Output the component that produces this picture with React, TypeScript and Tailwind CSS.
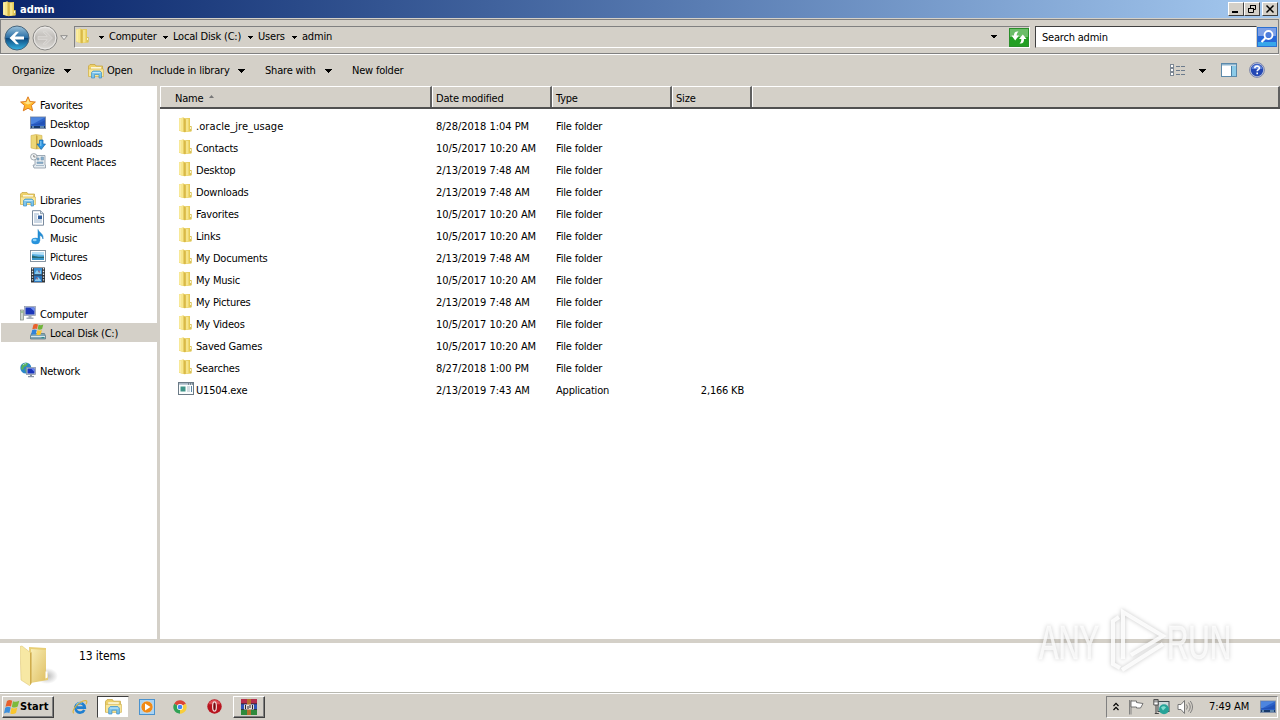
import React from 'react';

interface IconProps {
  className?: string;
}

const FolderIcon: React.FC<IconProps> = ({ className = 'w-4 h-4' }) => (
  <svg viewBox="0 0 16 16" className={className}>
    <path d="M1 1.500 5.500.5 6.500 1.200 12 1v8l1.500.5v5L8 15l-1.500.3-5.500-1.500z" fill="#e6cb55" />
    <path d="M1 1.500 5.500.5v14.500L1 13.500z" fill="#f7e68d" />
    <path d="M5.700 1 7.500 2.500V15l-1.800-.3z" fill="#d8b84a" />
    <path d="M8 2h2.500v12.300L8 14.700z" fill="#f5e48c" />
    <path d="M12 9h1.500v5l-1.500.3z" fill="#d9c25a" />
    <path d="M12 10h1v2h-1z" fill="#fbf5d2" />
    <path d="M2.200 13.500v-12" stroke="#fff6c2" strokeWidth=".7" />
  </svg>
);

const StarIcon = () => (
  <svg viewBox="0 0 16 16" className="w-4 h-4">
    <path d="M8 .8l2.100 4.700 5.300.5-4 3.500 1.300 5.300L8 12.200l-4.700 2.600 1.300-5.300-4-3.500 5.300-.5z" fill="#ffb72b" stroke="#d9731a" strokeWidth=".9" />
    <path d="M8 2.500 9.500 6.300l3.500.3-5 2-4.800-2 3.300-.3z" fill="#ffe48a" />
  </svg>
);

const DesktopIcon = () => (
  <svg viewBox="0 0 16 16" className="w-4 h-4">
    <rect x=".5" y="2" width="15" height="11.500" fill="#2c62c9" stroke="#8290a8" />
    <path d="M1 2.500h14L1 10z" fill="#4d85df" />
    <path d="M1 9c5 1 9-1 14-4v5H1z" fill="#1c48ab" opacity=".6" />
    <path d="M1 11h14v2H1z" fill="#173a6b" />
    <path d="M2 11.500h2v1H2zM10 11.500h4v1h-4z" fill="#a8d2ef" />
  </svg>
);

const DownloadsIcon = () => (
  <svg viewBox="0 0 16 16" className="w-4 h-4">
    <path d="M1 1.500 6 .5l6 1v13l-6 .5-5-1z" fill="#edd777" stroke="#d2b04e" strokeWidth=".6" />
    <path d="M6 1v14l1.500-.2V2z" fill="#c8a540" />
    <path d="M9.500 6h3.500v4h2.500L11.200 15.500 7 10h2.500z" fill="#2e95e0" stroke="#1665ad" strokeWidth=".7" />
    <path d="M10.300 7h1v5h-1z" fill="#8ccdf7" />
  </svg>
);

const RecentIcon = () => (
  <svg viewBox="0 0 16 16" className="w-4 h-4">
    <path d="M5 2.500h10v9.500h.5v3H4l-1-3h2z" fill="#e4ebf0" stroke="#8a98a5" strokeWidth=".8" />
    <path d="M7 5h2v2H7zM11 4h2.500v3H11zM7 9h6v1.500H7zM6 12.500h8" fill="#84b0d0" stroke="#7d99b0" strokeWidth=".6" />
    <circle cx="3.800" cy="3.800" r="3.200" fill="#f5f7f8" stroke="#8a949c" strokeWidth=".8" />
    <path d="M3.800 2v2h1.700" fill="none" stroke="#555" strokeWidth=".7" />
  </svg>
);

const LibraryIcon: React.FC<IconProps> = ({ className = 'w-4 h-4' }) => (
  <svg viewBox="0 0 16 16" className={className}>
    <path d="M.5 3 2 1.500h5l1 1.500h6.500v10H.5z" fill="#eed16a" stroke="#c4a23c" strokeWidth=".7" />
    <path d="M3 4h10v3H3z" fill="#fdf7d9" />
    <path d="M.5 6h15v7.500H.5z" fill="#f8e69a" stroke="#d0b14c" strokeWidth=".6" />
    <path d="M3.500 15V9.500L5 8h7l1.500 1.500V15H11v-3.500H6.500V15z" fill="#7cc4ec" stroke="#3d8fc6" strokeWidth=".7" />
    <path d="M4.500 9.500h8" stroke="#c4e7fa" />
  </svg>
);

const DocumentIcon = () => (
  <svg viewBox="0 0 16 16" className="w-4 h-4">
    <path d="M2.500.7h8l3 3v11.500h-11z" fill="#fff" stroke="#6c7f94" strokeWidth=".9" />
    <path d="M10.500.7v3h3" fill="#d5dfe8" stroke="#6c7f94" strokeWidth=".7" />
    <path d="M4 4h5M4 6h3M4 8h3M4 10h8M4 12h8" stroke="#7d9cbd" strokeWidth=".8" />
    <path d="M8 5.500h4V9H8z" fill="#2f5f9f" />
  </svg>
);

const MusicIcon = () => (
  <svg viewBox="0 0 16 16" className="w-4 h-4">
    <path d="M8 .5c.5 3 6 4 5 9.500-.6-2.500-2-3.400-3.200-3.500V12H8z" fill="#2390d8" stroke="#1879bc" strokeWidth=".5" />
    <ellipse cx="5.600" cy="12" rx="4.200" ry="3.300" fill="#2793dc" />
    <ellipse cx="4.700" cy="11" rx="2" ry="1.200" fill="#8fd2f7" />
  </svg>
);

const PictureIcon = () => (
  <svg viewBox="0 0 16 16" className="w-4 h-4">
    <rect x=".5" y="2.500" width="15" height="11" fill="#fff" stroke="#7b8a99" strokeWidth=".9" />
    <path d="M2 4h12v8H2z" fill="#5cb3e6" />
    <path d="M2 4h12v3L2 6z" fill="#b9e1f7" />
    <path d="M2 7.500c3 0 4 2 12 1V12H2z" fill="#276a76" />
    <path d="M2 10h12v2H2z" fill="#3995c8" />
  </svg>
);

const VideoIcon = () => (
  <svg viewBox="0 0 16 16" className="w-4 h-4">
    <path d="M1 .5h14v15H1z" fill="#2e3338" />
    <path d="M4 1h8v6.500H4z" fill="#3c8fd2" />
    <path d="M4 8.500h8V15H4z" fill="#2a75bd" />
    <path d="M5 6l2-3 2 2 2-2v4H5zM5 13l3-3 3 3v1H5z" fill="#8ccbec" />
    <path d="M8 3l2 2-1 1zM6 10l2 1-1 2z" fill="#a05064" />
    <path d="M2.500 1v14M13.500 1v14" stroke="#e6eaee" strokeWidth="1.300" strokeDasharray="1.400 1.400" />
  </svg>
);

const ComputerIcon = () => (
  <svg viewBox="0 0 16 16" className="w-4 h-4">
    <rect x=".5" y="5" width="3" height="10" fill="#cfd6cf" stroke="#7f8b82" strokeWidth=".7" />
    <path d="M1.200 7h1.600" stroke="#51a24a" />
    <rect x="4.500" y="1.500" width="11" height="9" fill="#c9d0dc" stroke="#8b95a8" strokeWidth=".7" />
    <path d="M5.500 2.500h9v7h-9z" fill="#1b36ba" />
    <path d="M10 2.500h4.500v4z" fill="#6d8df0" />
    <path d="M8.500 10.500h3v2h2v1.500h-7v-1.500h2z" fill="#a4adba" />
  </svg>
);

const WindowsFlag: React.FC<IconProps> = ({ className = 'w-4 h-4' }) => (
  <svg viewBox="0 0 16 16" className={className}>
    <path d="M3 2c2-1.300 3.500-1 5.200-.2L7 7.500C5.300 6.700 3.700 6.600 1.500 7.800z" fill="#e8602c" />
    <path d="M9 2.200c2 .9 3.700.8 6.300-.4L13.700 7.600c-2 1.200-4 1.200-5.900.3z" fill="#7dba3c" />
    <path d="M1.200 8.700c2-1.200 3.700-1 5.500-.3l-1.300 5.700c-1.700-.8-3.200-.8-5.400.4z" fill="#3d8fdc" />
    <path d="M7.500 8.800c2 .9 3.700.8 5.800-.4L12 14.100c-2.100 1.200-3.800 1.300-5.700.4z" fill="#f9c62e" />
  </svg>
);

const DiskIcon = () => (
  <svg viewBox="0 0 16 16" className="w-4 h-4">
    <path d="M1.500 9.500h13l1 2.500v3H.5v-3z" fill="#7fa5b4" stroke="#56727e" strokeWidth=".7" />
    <path d="M1 12.500h14" stroke="#d5e6ed" />
    <path d="M11.500 13h2.500v1.200h-2.500z" fill="#2b8f8b" />
    <path d="M3.500.5c1.800-.8 3-.6 4.500 0l-1 4.500C5.500 4.500 4 4.500 2.300 5.300z" fill="#e8602c" />
    <path d="M8.600.7c1.600.6 3 .6 4.700-.2l-1.200 4.500c-1.700.8-3 .8-4.500.2z" fill="#6fb43a" />
    <path d="M2.200 6c1.700-.8 3-.6 4.500 0l-1.100 4.500c-1.500-.5-2.700-.5-4.500.3z" fill="#2f83da" />
    <path d="M7.400 6.200c1.500.6 2.900.6 4.500-.2l-1.200 4.500c-1.600.8-3 .8-4.400.2z" fill="#f9c62e" />
  </svg>
);

const NetworkIcon = () => (
  <svg viewBox="0 0 16 16" className="w-4 h-4">
    <circle cx="5.800" cy="6" r="5.500" fill="#2b86c9" />
    <path d="M2 3c2-2 4-2.500 6-1.500L6.500 4 4 5 3 8 1 7zM5 7l3 0 0 3-2 1z" fill="#58b35a" />
    <path d="M3 3c1-1 2-1.300 3-1.300" stroke="#b9e7f5" />
    <rect x="6.500" y="5.500" width="9" height="7" fill="#c9d0dc" stroke="#7f8ba0" strokeWidth=".7" />
    <path d="M7.500 6.500h7v5h-7z" fill="#1a35bd" />
    <path d="M11 6.500h3.500V10z" fill="#6786ee" />
    <path d="M10 12.500h2v1.500h2v1.300H8V14h2z" fill="#8793a4" />
  </svg>
);

const AppIcon = () => (
  <svg viewBox="0 0 16 16" className="w-4 h-4">
    <rect x=".5" y="1.500" width="15" height="12" fill="#fbfdfd" stroke="#6b7a86" />
    <path d="M1 2h14v1.700H1z" fill="#a7b6c4" />
    <path d="M10 3h1M12 3h1M14 3h.8" stroke="#37474f" />
    <path d="M2.500 5.500h5v5h-5z" fill="#3f9488" />
    <path d="M9 6h3M9 8h3M9 10h3" stroke="#9fb3c0" strokeWidth=".9" />
    <path d="M13.500 5v6" stroke="#5b86a5" />
  </svg>
);

const BackButton = () => (
  <svg viewBox="0 0 26 26" className="w-[26px] h-[26px]">
    <defs>
      <linearGradient id="back" x1="0" y1="0" x2="0" y2="1">
        <stop offset="0" stopColor="#9cc3dc" />
        <stop offset=".48" stopColor="#2a6fa6" />
        <stop offset=".52" stopColor="#0c4a80" />
        <stop offset="1" stopColor="#38b4e4" />
      </linearGradient>
    </defs>
    <circle cx="13" cy="13" r="12" fill="url(#back)" stroke="#47657c" />
    <path d="M5.500 13 12 6.800h3L10.800 11.400H20v3.200h-9.200l4.200 4.600h-3z" fill="#fff" />
  </svg>
);

const ForwardButton = () => (
  <svg viewBox="0 0 26 26" className="w-[26px] h-[26px]">
    <defs>
      <linearGradient id="fwd" x1="0" y1="0" x2="0" y2="1">
        <stop offset="0" stopColor="#e4e2df" />
        <stop offset=".5" stopColor="#bdbab6" />
        <stop offset="1" stopColor="#dedcd8" />
      </linearGradient>
    </defs>
    <circle cx="13" cy="13" r="12" fill="url(#fwd)" stroke="#8b8a88" />
    <circle cx="13" cy="13" r="10.800" fill="none" stroke="#eceae8" />
    <path d="M20.500 13 14 6.800h-3l4.200 4.600H6v3.200h9.200L11 19.200h3z" fill="#cfccc8" stroke="#dddbd8" strokeWidth=".8" />
  </svg>
);

const Arrow: React.FC<IconProps> = ({ className = 'w-[7px] h-1' }) => (
  <svg viewBox="0 0 7 4" className={className} shapeRendering="crispEdges">
    <path d="M0 0h7L3.500 4z" fill="#000" />
  </svg>
);

const RefreshIcon = () => (
  <svg viewBox="0 0 20 19" className="w-5 h-[19px]">
    <rect width="20" height="19" fill="#2b8f2b" />
    <path d="M1 1h18v8H1z" fill="#6bbd68" />
    <path d="M1 9h18v9H1z" fill="#23a023" />
    <path d="M9.500 3.500C6 3 4.800 5 5 7.500H2.500l3.700 5 3.800-5H7.700c0-1.500.3-2.800 1.800-4z" fill="#fff" />
    <path d="M10.500 15.500c3.500.5 4.700-1.500 4.500-4.500h2.500l-3.700-4.500L10 11h2.300c0 1.700-.3 3.300-1.800 4.500z" fill="#fff" />
  </svg>
);

const SearchIcon = () => (
  <svg viewBox="0 0 20 20" className="w-5 h-5">
    <rect width="20" height="20" fill="#2c6fd0" />
    <path d="M1 1h18v8H1z" fill="#7c9fe6" />
    <path d="M1 9h18v10H1z" fill="#2767d8" />
    <path d="M1 15h18v4H1z" fill="#36a6ea" />
    <circle cx="11.500" cy="8" r="4" fill="#4c7cdc" stroke="#fff" strokeWidth="1.800" />
    <path d="M8.500 11 4.500 15" stroke="#fff" strokeWidth="2.200" />
  </svg>
);

const ViewIcon = () => (
  <svg viewBox="0 0 16 13" className="w-4 h-[13px]" shapeRendering="crispEdges">
    {[0, 4, 8].map((y) => (
      <g key={y}>
        <rect x=".5" y={y + 0.5} width="3" height="3" fill="#fff" stroke="#7d8894" />
        <path d={`M6 ${y + 2.500}h4M11 ${y + 2.500}h4`} stroke="#6c7b8c" />
      </g>
    ))}
  </svg>
);

const PaneIcon = () => (
  <svg viewBox="0 0 16 14" className="w-4 h-3.5">
    <rect x=".5" y=".5" width="15" height="13" fill="#fff" stroke="#5b89aa" />
    <path d="M1 1h14v1.500H1z" fill="#8db4ce" />
    <path d="M10.500 3h4.500v10h-4.500z" fill="#8ccbe8" />
    <path d="M10.500 3v10" stroke="#4b80a6" />
  </svg>
);

const HelpIcon = () => (
  <svg viewBox="0 0 16 16" className="w-4 h-4">
    <circle cx="8" cy="8" r="7.400" fill="#c4cbe0" stroke="#6672a0" strokeWidth=".8" />
    <circle cx="8" cy="8" r="6.200" fill="#2347b4" />
    <path d="M2.500 7a5.600 5.600 0 0 1 11 0z" fill="#5f82d8" />
    <path d="M5.800 6.300c0-3 4.600-2.800 4.600-.3 0 1.700-2.200 1.700-2.200 3.300M8.200 10.500v1.700" fill="none" stroke="#fff" strokeWidth="1.600" />
  </svg>
);

const IeIcon = () => (
  <svg viewBox="0 0 16 16" className="w-4 h-4">
    <path d="M12.300 11A4.700 4.700 0 1 1 12.800 8.700H5" fill="none" stroke="#1f7fd0" strokeWidth="2.700" />
    <path d="M4 5.500A5 5 0 0 1 10 4" fill="none" stroke="#85cdf6" />
    <path d="M1.800 14.300C-1.500 12 7 2 13.500 1.500c2 0 1.500 2.300.5 3.700" fill="none" stroke="#dfb436" strokeWidth="1.100" />
  </svg>
);

const MediaIcon = () => (
  <svg viewBox="0 0 16 16" className="w-4 h-4">
    <rect x=".5" y=".5" width="15" height="15" fill="#a9d3f3" stroke="#4a92ce" />
    <circle cx="8" cy="8" r="6" fill="#f18a16" stroke="#d4e6f5" strokeWidth=".6" />
    <path d="M6 4.500v7L11.500 8z" fill="#fff" />
  </svg>
);

const ChromeIcon = () => (
  <svg viewBox="0 0 16 16" className="w-3.5 h-3.5">
    <path d="M8 8 1.400 4.200A7.600 7.600 0 0 1 14.700 4.400z" fill="#dc4437" />
    <path d="M8 8 14.700 4.400A7.600 7.600 0 0 1 8 15.600z" fill="#f8ce3b" />
    <path d="M8 8v7.600A7.600 7.600 0 0 1 1.400 4.200z" fill="#2fa255" />
    <circle cx="8" cy="8" r="3.500" fill="#fff" />
    <circle cx="8" cy="8" r="2.700" fill="#4285f4" />
  </svg>
);

const OperaIcon = () => (
  <svg viewBox="0 0 16 16" className="w-[15px] h-[15px]">
    <circle cx="8" cy="8" r="7.700" fill="#b8141f" />
    <path d="M1.500 5.500a7 7 0 0 1 13 0z" fill="#dc4b53" />
    <ellipse cx="8" cy="8" rx="2" ry="5" fill="#7c0a12" stroke="#f4dcdc" strokeWidth="1.300" />
  </svg>
);

const WinrarIcon = () => (
  <svg viewBox="0 0 16 16" className="w-4 h-4">
    <path d="M0 0h16v5H0z" fill="#b52d4c" />
    <path d="M0 5h16v5.500H0z" fill="#2f55b8" />
    <path d="M0 10.500h16V16H0z" fill="#2f8a3c" />
    <path d="M0 4.800h16M0 10.500h16" stroke="#1f2433" strokeWidth=".8" />
    <path d="M6 0h4v16H6z" fill="#b5702c" />
    <path d="M3 5.500h10v5H3z" fill="#e4dfd6" />
    <path d="M4.500 6v4M7 7v3M9 6v3M11.500 6v4" stroke="#2b2434" strokeWidth="1" />
  </svg>
);

const TrayFlag = () => (
  <svg viewBox="0 0 16 16" className="w-4 h-4">
    <path d="M1.500 1v14.500M3 1v14.500" stroke="#6e6e6e" strokeWidth=".8" />
    <path d="M3 2h5.500v1.500L15 4.500 12.500 9H8.500V8H3z" fill="#fff" stroke="#666" strokeWidth=".9" />
  </svg>
);

const TrayNetwork = () => (
  <svg viewBox="0 0 17 16" className="w-[17px] h-4">
    <rect x="5" y="2.500" width="11" height="10" fill="#cfdadb" stroke="#3f4b4f" />
    <path d="M.8.500h4.400v5.500H.8z" fill="#fff" stroke="#444" strokeWidth=".9" />
    <path d="M2 .5v3M4 .5v3M3 6v8.500M1.800 14.500h4" fill="none" stroke="#444" />
    <circle cx="11" cy="10.300" r="5" fill="#26a398" />
    <path d="M8 8.500c2-2 4-1 5 0l-3 3z" fill="#7fdccd" />
  </svg>
);

const TraySpeaker = () => (
  <svg viewBox="0 0 17 16" className="w-[17px] h-4">
    <path d="M1 5.500h3L7.500 1.500v13L4 10.500H1z" fill="#fff" stroke="#777" />
    <path d="M9.500 5.500q1.800 2.500 0 5M11.500 3.500q3.500 4.500 0 9M13.300 2q4.500 6 0 12" fill="none" stroke="#777" strokeWidth=".9" />
  </svg>
);

const LargeFolder = () => (
  <svg viewBox="0 0 38 42" className="w-[38px] h-[42px]">
    <defs>
      <linearGradient id="lf" x1="0" y1="0" x2="1" y2="1">
        <stop offset="0" stopColor="#f9eeb5" />
        <stop offset="1" stopColor="#dfc065" />
      </linearGradient>
      <radialGradient id="sh">
        <stop offset="0" stopColor="#999" stopOpacity=".7" />
        <stop offset="1" stopColor="#999" stopOpacity="0" />
      </radialGradient>
    </defs>
    <ellipse cx="27" cy="31" rx="11" ry="8" fill="url(#sh)" />
    <path d="M9 2 26 3v24l2 2v6L10 38z" fill="#e8ce75" />
    <path d="M11 4l15 1v22l-1 8-14 2z" fill="url(#lf)" />
    <path d="M0 1.500 2 1l9 7v31l-1.500 1.500L1 35z" fill="#f7e8a4" stroke="#dfc878" strokeWidth=".6" />
    <path d="M10 8l1.500-1v31L10 40z" fill="#cfac4c" />
    <path d="M25.500 26.500h2v6l-2 1z" fill="#fff" />
  </svg>
);

const Watermark = () => (
  <svg
    viewBox="0 0 200 70"
    className="absolute left-[1035px] top-[605px] w-[200px] h-[70px] overflow-visible drop-shadow-[0_0_2px_rgba(0,0,0,0.26)]"
  >
    <g fill="#fff" fillOpacity=".75" stroke="#fff" strokeOpacity=".5" strokeWidth=".8" fontFamily="Liberation Sans, sans-serif" fontSize="48">
      <text x="4" y="54" textLength="60" lengthAdjust="spacingAndGlyphs">ANY</text>
      <text x="132" y="54" textLength="64" lengthAdjust="spacingAndGlyphs">RUN</text>
    </g>
    <path
      d="M84 12 78 16v43l7 4M88 54V7L128 31 96 50M87 65 128 39"
      fill="none"
      stroke="#fff"
      strokeOpacity=".85"
      strokeWidth="4"
    />
  </svg>
);

const navGroups = [
  {
    title: 'Favorites',
    icon: <StarIcon />,
    items: [
      { name: 'Desktop', icon: <DesktopIcon /> },
      { name: 'Downloads', icon: <DownloadsIcon /> },
      { name: 'Recent Places', icon: <RecentIcon /> },
    ],
  },
  {
    title: 'Libraries',
    icon: <LibraryIcon />,
    items: [
      { name: 'Documents', icon: <DocumentIcon /> },
      { name: 'Music', icon: <MusicIcon /> },
      { name: 'Pictures', icon: <PictureIcon /> },
      { name: 'Videos', icon: <VideoIcon /> },
    ],
  },
  {
    title: 'Computer',
    icon: <ComputerIcon />,
    items: [{ name: 'Local Disk (C:)', icon: <DiskIcon />, selected: true }],
  },
  { title: 'Network', icon: <NetworkIcon />, items: [] },
];

const files = [
  { name: '.oracle_jre_usage', date: '8/28/2018 1:04 PM' },
  { name: 'Contacts', date: '10/5/2017 10:20 AM' },
  { name: 'Desktop', date: '2/13/2019 7:48 AM' },
  { name: 'Downloads', date: '2/13/2019 7:48 AM' },
  { name: 'Favorites', date: '10/5/2017 10:20 AM' },
  { name: 'Links', date: '10/5/2017 10:20 AM' },
  { name: 'My Documents', date: '2/13/2019 7:48 AM' },
  { name: 'My Music', date: '10/5/2017 10:20 AM' },
  { name: 'My Pictures', date: '2/13/2019 7:48 AM' },
  { name: 'My Videos', date: '10/5/2017 10:20 AM' },
  { name: 'Saved Games', date: '10/5/2017 10:20 AM' },
  { name: 'Searches', date: '8/27/2018 1:00 PM' },
  { name: 'U1504.exe', date: '2/13/2019 7:43 AM', type: 'Application', size: '2,166 KB' },
];

const crumbs = [
  { name: 'Computer', width: 'w-[64px]' },
  { name: 'Local Disk (C:)', width: 'w-[85px]' },
  { name: 'Users', width: 'w-[44px]' },
  { name: 'admin', width: 'w-[44px]' },
];

const TitleBar = () => (
  <div className="h-[18px] shrink-0 flex items-center bg-linear-to-r from-[#0a246a] to-[#a6caf0] pl-0.5 pr-0.5">
    <FolderIcon />
    <span className="ml-0.5 flex-1 pt-px text-white font-bold tracking-normal">admin</span>
    <div className="flex h-3.5">
      {['min', 'max', 'close'].map((b) => (
        <div
          key={b}
          className={`w-4 h-3.5 bg-[#d4d0c8] border border-t-white border-l-white border-r-[#404040] border-b-[#404040] flex items-center justify-center ${b === 'close' ? 'ml-0.5' : ''}`}
        >
          <svg viewBox="0 0 10 10" className="w-2.5 h-2.5" fill="none" stroke="#000">
            {b === 'min' && <path d="M1 8h6" strokeWidth="2" />}
            {b === 'max' && <path d="M3.500 4V1.500h5v4H7M3 1.500h6M1.500 4.500h5v4h-5zM1 4.500h6" />}
            {b === 'close' && <path d="M1.500 1.500l7 7M8.500 1.500l-7 7" strokeWidth="1.500" />}
          </svg>
        </div>
      ))}
    </div>
  </div>
);

const AddressBar = () => (
  <div className="h-[35px] shrink-0 mt-px mr-px flex border border-[#808080] shadow-[0_1px_0_#fff]">
    <div className="flex items-center pl-[3px] pt-0.5 w-[73px] shrink-0">
      <BackButton />
      <div className="ml-0.5">
        <ForwardButton />
      </div>
      <svg viewBox="0 0 8 6" className="w-2 h-1.5 ml-0.5 shrink-0">
        <path d="M.7.700h6.600L4 4.700z" fill="#efeeec" stroke="#777" strokeWidth=".8" />
      </svg>
    </div>
    <div className="flex-1 h-[22px] mt-1.5 flex items-center border border-t-[#808080] border-l-[#808080] border-r-white border-b-white">
      <div className="mb-0.5">
        <FolderIcon />
      </div>
      <Arrow className="w-[5px] h-[3px] ml-[8px] shrink-0" />
      {crumbs.map((c, i) => (
        <div key={c.name} className={`flex items-center whitespace-nowrap ${c.width}`}>
          <span className="flex-1 pl-[5px]">{c.name}</span>
          {i < crumbs.length - 1 && <Arrow className="w-[5px] h-[3px] shrink-0" />}
        </div>
      ))}
      <div className="flex-1" />
      <Arrow className="w-2 h-1 mr-[11px]" />
      <RefreshIcon />
    </div>
    <div className="w-[222px] h-[22px] mt-1.5 ml-[5px] bg-white border border-t-[#404040] border-l-[#404040] border-[#d4d0c8] flex items-center pl-1.5 pt-0.5">
      Search admin
    </div>
    <div className="mt-[7px] mr-px">
      <SearchIcon />
    </div>
  </div>
);

const Toolbar = () => (
  <div className="h-[31px] shrink-0 mt-px flex items-center pl-3 pr-[15px] whitespace-nowrap">
    <span className="w-[52px]">Organize</span>
    <Arrow className="w-[7px] h-1" />
    <div className="ml-[17px]">
      <LibraryIcon />
    </div>
    <span className="ml-[3px] w-[43px]">Open</span>
    <span className="w-[88px]">Include in library</span>
    <Arrow className="w-[7px] h-1" />
    <span className="ml-5 w-[60px]">Share with</span>
    <Arrow className="w-[7px] h-1" />
    <span className="ml-5">New folder</span>
    <div className="flex-1" />
    <ViewIcon />
    <Arrow className="w-[7px] h-1 ml-[13px]" />
    <div className="ml-[15px] mb-0.5">
      <PaneIcon />
    </div>
    <div className="ml-3 mb-0.5">
      <HelpIcon />
    </div>
  </div>
);

const headCell = 'h-full flex items-center border-t border-l border-t-white border-l-white border-r-2 border-r-[#606060] pl-[3px] pt-[3px]';

const Explorer = () => (
  <div className="flex-1 flex min-h-0">
    {/* Navigation pane */}
    <div className="w-[157px] bg-white pt-[9px] pl-px flex flex-col gap-[19px]">
      {navGroups.map((g) => (
        <div key={g.title}>
          <div className="h-[19px] flex items-center pl-[19px] gap-1 [&>svg]:mb-0.5">
            {g.icon}
            <span className="pt-0.5">{g.title}</span>
          </div>
          {g.items.map((item) => (
            <div
              key={item.name}
              className={`h-[19px] flex items-center pl-[29px] gap-1 [&>svg]:mb-0.5 ${'selected' in item ? 'bg-[#d4d0c8]' : ''}`}
            >
              {item.icon}
              <span className="pt-0.5">{item.name}</span>
            </div>
          ))}
        </div>
      ))}
    </div>
    <div className="w-[3px] bg-[#d4d0c8]" />

    {/* File list */}
    <div className="flex-1 bg-white">
      <div className="h-[23px] flex border-b-2 border-[#505050] bg-[#d4d0c8]">
        <div className={`${headCell} w-[272px]`}>
          <span className="ml-[11px]">Name</span>
          <svg viewBox="0 0 5 3" className="w-[5px] h-[3px] ml-1.5 mb-1">
            <path d="M0 3 2.500 0 5 3z" fill="#777" />
          </svg>
        </div>
        <div className={`${headCell} w-[120px]`}>Date modified</div>
        <div className={`${headCell} w-[120px]`}>Type</div>
        <div className={`${headCell} w-[80px]`}>Size</div>
        <div className={`${headCell} flex-1`} />
      </div>
      <div className="pt-[7px]">
        {files.map((f, i) => (
          <div key={f.name} className="h-[22px] flex items-center whitespace-nowrap">
            <div className="w-[276px] pl-[18px] flex items-center gap-0.5">
              <div className="-mt-1">{f.type ? <AppIcon /> : <FolderIcon />}</div>
              <span className={i === 0 ? 'tracking-[0.08px]' : ''}>{f.name}</span>
            </div>
            <span className="w-[120px] tracking-[-0.04px]">{f.date}</span>
            <span className="w-[120px]">{f.type ?? 'File folder'}</span>
            <span className="w-[68px] text-right">{f.size}</span>
          </div>
        ))}
      </div>
    </div>
  </div>
);

const Taskbar = () => (
  <div className="h-[28px] shrink-0 flex items-center border-t border-[#b8b8b0] shadow-[inset_0_1px_0_#fff] pl-[2px] pr-[2px]">
    <div className="w-[52px] h-[22px] flex items-center border border-t-white border-l-white border-r-[#404040] border-b-[#404040] shadow-[inset_-1px_-1px_0_#808080] pl-px">
      <WindowsFlag />
      <span className="font-bold tracking-[0.1px] pt-px">Start</span>
    </div>
    <div className="ml-[18px]">
      <IeIcon />
    </div>
    <div className="ml-[9px] w-8 h-[22px] bg-white border border-t-[#404040] border-l-[#404040] border-[#d4d0c8] flex items-center justify-center">
      <LibraryIcon className="w-[17px] h-[17px]" />
    </div>
    <div className="ml-2.5">
      <MediaIcon />
    </div>
    <div className="ml-[18px]">
      <ChromeIcon />
    </div>
    <div className="ml-5">
      <OperaIcon />
    </div>
    <div className="ml-[11px] w-8 h-[22px] flex items-center justify-center border border-t-white border-l-white border-r-[#404040] border-b-[#404040] shadow-[inset_-1px_-1px_0_#808080]">
      <WinrarIcon />
    </div>
    <div className="flex-1" />
    <div className="w-[172px] h-[22px] flex items-center border border-t-[#808080] border-l-[#808080] border-r-white border-b-white pl-1.5 pr-px">
      <svg viewBox="0 0 6 9" className="w-1.5 h-[9px]" fill="none" stroke="#000" strokeWidth="1.200">
        <path d="M.5 4 3 1.300 5.500 4M.5 8 3 5.300 5.500 8" />
      </svg>
      <div className="ml-[9px]">
        <TrayFlag />
      </div>
      <div className="ml-[9px]">
        <TrayNetwork />
      </div>
      <div className="ml-[7px]">
        <TraySpeaker />
      </div>
      <span className="flex-1 ml-[15px] pt-px whitespace-nowrap tracking-[-0.05px]">7:49 AM</span>
      <DesktopIcon />
    </div>
  </div>
);

const App: React.FC = () => (
  <div className="relative w-[1280px] h-[720px] overflow-hidden flex flex-col bg-[#d4d0c8] text-black text-[11px] leading-[14px] [&_svg]:shrink-0 font-['DejaVu_Sans_Condensed','DejaVu_Sans',sans-serif] [font-stretch:75%] tracking-[-0.2px]">
    <TitleBar />
    <AddressBar />
    <Toolbar />
    <Explorer />

    {/* Details pane */}
    <div className="h-[53px] shrink-0 flex items-start border-t-4 border-[#d4d0c8] bg-white pl-5">
      <div className="mt-[2px]">
        <LargeFolder />
      </div>
      <span className="ml-[21px] mt-[5px] text-xs tracking-[-0.1px]">13 items</span>
    </div>
    <Taskbar />
    <Watermark />
  </div>
);

export default App;
